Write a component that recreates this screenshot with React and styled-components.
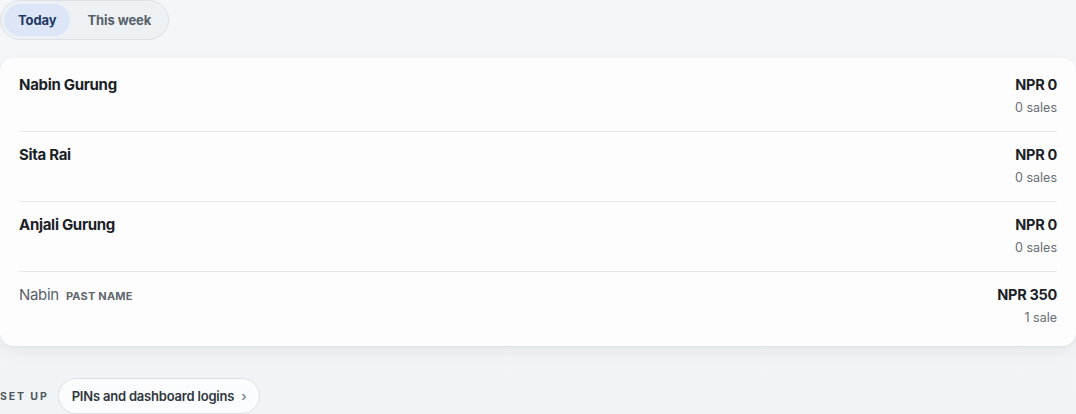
import React from "react";
import styled, { createGlobalStyle } from "styled-components";

const GlobalStyle = createGlobalStyle`
  html, body {
    margin: 0;
    padding: 0;
    background: #f2f5f7;
    font-family: "Inter", "Liberation Sans", sans-serif;
    -webkit-font-smoothing: antialiased;
  }
`;

const Page = styled.div`
  width: 1076px;
  height: 414px;
  overflow: hidden;
  display: flex;
  flex-direction: column;
  background: linear-gradient(180deg, #f4f6f8 0%, #f1f4f6 100%);
`;

const Tabs = styled.div`
  display: flex;
  align-items: center;
  gap: 3px;
  width: max-content;
  height: 40px;
  box-sizing: border-box;
  padding: 3px;
  border: 1px solid #dde1e6;
  border-radius: 20px;
  background: #eef1f4;
`;

const Tab = styled.button`
  border: none;
  height: 32px;
  padding: 0 14px;
  border-radius: 16px;
  font-family: inherit;
  font-size: 13px;
  font-weight: 700;
  letter-spacing: -0.1px;
  background: ${(p) => (p.$active ? "#dce6f6" : "transparent")};
  color: ${(p) => (p.$active ? "#1f3865" : "#56606a")};
  cursor: pointer;
`;

const Card = styled.div`
  margin-top: 18px;
  background: #fdfdfe;
  border-radius: 14px;
  padding: 3px 19px 5px;
  box-shadow: 0 6px 14px rgba(30, 40, 60, 0.06), 0 1px 2px rgba(30, 40, 60, 0.04);
`;

const Row = styled.div`
  display: flex;
  justify-content: space-between;
  align-items: flex-start;
  box-sizing: border-box;
  height: 70px;
  padding-top: 14px;
  & + & {
    padding-top: 13px;
    border-top: 1px solid #e8ebee;
  }
`;

const Name = styled.div`
  display: flex;
  align-items: baseline;
  gap: 7px;
  font-size: 15px;
  line-height: 20px;
  font-weight: ${(p) => (p.$past ? 400 : 700)};
  color: ${(p) => (p.$past ? "#5a6068" : "#1b1f27")};
  letter-spacing: -0.3px;
`;

const Tag = styled.span`
  font-size: 11px;
  font-weight: 700;
  color: #5e666e;
  text-transform: uppercase;
  letter-spacing: 0.2px;
`;

const Figures = styled.div`
  display: flex;
  flex-direction: column;
  align-items: flex-end;
  gap: 4px;
`;

const Amount = styled.div`
  font-size: 14.5px;
  line-height: 20px;
  font-weight: 700;
  color: #1b1f27;
  letter-spacing: -0.3px;
`;

const Sales = styled.div`
  font-size: 12.5px;
  line-height: 18px;
  color: #676d74;
`;

const Divider = styled.div`
  margin-top: 18px;
  height: 1px;
  background: #d9dee3;
`;

const SetupBar = styled.div`
  display: flex;
  align-items: center;
  gap: 9px;
  margin-top: 14px;
`;

const SetupLabel = styled.span`
  font-size: 10.5px;
  font-weight: 700;
  letter-spacing: 1.9px;
  color: #4d565e;
`;

const Pill = styled.button`
  display: flex;
  align-items: center;
  gap: 7px;
  height: 36px;
  padding: 0 13px;
  border: 1px solid #dde1e6;
  border-radius: 18px;
  background: #fbfcfd;
  font-family: inherit;
  font-size: 13px;
  font-weight: 600;
  color: #30363d;
  letter-spacing: -0.2px;
`;

const Chevron = styled.span`
  font-size: 13px;
  color: #7c848c;
`;

const rows = [
  { name: "Nabin Gurung", amount: "NPR 0", sales: "0 sales" },
  { name: "Sita Rai", amount: "NPR 0", sales: "0 sales" },
  { name: "Anjali Gurung", amount: "NPR 0", sales: "0 sales" },
  { name: "Nabin", past: true, amount: "NPR 350", sales: "1 sale" },
];

export default function App() {
  return (
    <>
      <GlobalStyle />
      <Page>
        <Tabs>
          <Tab $active>Today</Tab>
          <Tab>This week</Tab>
        </Tabs>
        <Card>
          {rows.map((r) => (
            <Row key={r.name + r.amount}>
              <Name $past={r.past}>
                {r.name}
                {r.past && <Tag>Past name</Tag>}
              </Name>
              <Figures>
                <Amount>{r.amount}</Amount>
                <Sales>{r.sales}</Sales>
              </Figures>
            </Row>
          ))}
        </Card>
        <Divider />
        <SetupBar>
          <SetupLabel>SET UP</SetupLabel>
          <Pill>
            PINs and dashboard logins
            <Chevron>›</Chevron>
          </Pill>
        </SetupBar>
      </Page>
    </>
  );
}
